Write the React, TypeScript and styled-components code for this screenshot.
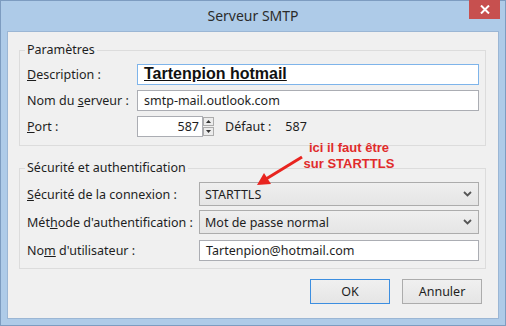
import React from "react";
import styled, { createGlobalStyle } from "styled-components";

const GlobalStyle = createGlobalStyle`
  html, body {
    margin: 0;
    padding: 0;
    background: #ffffff;
  }
  body {
    font-family: "Noto Sans", "Open Sans", sans-serif;
    font-size: 12.5px;
    color: #1e1e1e;
  }
`;

const Window = styled.div`
  position: relative;
  width: 506px;
  height: 326px;
  box-sizing: border-box;
  background: #aecbe8;
  border: 1px solid #7d9cc0;
  display: flex;
  flex-direction: column;
`;

const TitleBar = styled.div`
  height: 30px;
  display: grid;
  grid-template-columns: 1fr auto 1fr;
  align-items: start;
`;

const Title = styled.div`
  grid-column: 2;
  font-size: 14px;
  color: #2b2b2b;
  line-height: 30px;
`;

const CloseButton = styled.div`
  grid-column: 3;
  justify-self: end;
  width: 31px;
  height: 19px;
  margin-right: 5px;
  margin-top: -1px;
  background: #c7504f;
  display: flex;
  align-items: center;
  justify-content: center;
`;

const Panel = styled.div`
  flex: 1;
  margin: 0 6px 6px 6px;
  background: #f0f0f0;
  border: 1px solid #9bb6d4;
  padding: 10px 12px 0 11px;
  display: flex;
  flex-direction: column;
`;

const Group = styled.fieldset<{ $pt: number; $pb: number }>`
  margin: 0;
  border: 1px solid #dcdcdc;
  padding: ${(p) => p.$pt}px 6px ${(p) => p.$pb}px 7px;
  min-width: 0;
`;

const Legend = styled.legend`
  padding: 0 2px;
  margin-left: -2px;
  line-height: 16px;
  color: #1e1e1e;
`;

const Rows = styled.div<{ $label: number }>`
  display: grid;
  grid-template-columns: ${(p) => p.$label}px 1fr;
  align-items: center;
`;

const Label = styled.div<{ $h: number }>`
  height: ${(p) => p.$h}px;
  display: flex;
  align-items: center;
  white-space: nowrap;
`;

const TextBox = styled.div<{ $focus?: boolean }>`
  height: 21px;
  box-sizing: border-box;
  background: #ffffff;
  border: 1px solid ${(p) => (p.$focus ? "#7eb4ea" : "#abadb3")};
  display: flex;
  align-items: center;
  padding: 0 6px;
  white-space: nowrap;
  overflow: hidden;
`;

const BigText = styled.span`
  font-family: "Liberation Sans", Arial, sans-serif;
  font-weight: bold;
  font-size: 16px;
  text-decoration: underline;
  color: #111;
`;

const PortLine = styled.div`
  display: flex;
  align-items: center;
`;

const PortBox = styled(TextBox)`
  width: 66px;
  justify-content: flex-end;
  padding: 0 3px;
`;

const Spin = styled.div`
  display: flex;
  flex-direction: column;
  gap: 1px;
`;

const SpinBtn = styled.div`
  width: 11px;
  height: 9px;
  box-sizing: border-box;
  border: 1px solid #acacac;
  background: #ececec;
  display: flex;
  align-items: center;
  justify-content: center;
`;

const Default = styled.span<{ $ml: number }>`
  margin-left: ${(p) => p.$ml}px;
`;

const SelectBox = styled.div`
  height: 24px;
  box-sizing: border-box;
  border: 1px solid #acacac;
  background: linear-gradient(#efefef, #e5e5e5);
  display: flex;
  align-items: center;
  justify-content: space-between;
  padding: 0 6px 0 5px;
`;

const Gap = styled.div<{ $h: number }>`
  height: ${(p) => p.$h}px;
  flex: none;
`;

const ButtonRow = styled.div`
  display: flex;
  justify-content: flex-end;
  gap: 12px;
  padding-right: 4px;
`;

const Button = styled.div<{ $primary?: boolean }>`
  width: 80px;
  height: 25px;
  box-sizing: border-box;
  border: 1px solid ${(p) => (p.$primary ? "#3c8ee0" : "#acacac")};
  background: linear-gradient(#f0f0f0, #e5e5e5);
  display: flex;
  align-items: center;
  justify-content: center;
`;

const Note = styled.div`
  position: absolute;
  left: 298px;
  top: 139px;
  width: 100px;
  text-align: center;
  font-family: "Liberation Sans", Arial, sans-serif;
  font-weight: bold;
  font-size: 13px;
  line-height: 16px;
  color: #e02b2b;
`;

const Arrow = styled.svg`
  position: absolute;
  left: 0;
  top: 0;
  pointer-events: none;
`;

const Chevron = () => (
  <svg width="9" height="6" viewBox="0 0 9 6">
    <path d="M1 1 L4.5 4.5 L8 1" fill="none" stroke="#555" strokeWidth="1.8" />
  </svg>
);

const Tri = ({ up }: { up?: boolean }) => (
  <svg width="5" height="3" viewBox="0 0 5 3">
    <path d={up ? "M0 3 L2.5 0 L5 3 Z" : "M0 0 L2.5 3 L5 0 Z"} fill="#333" />
  </svg>
);

export default function App() {
  return (
    <>
      <GlobalStyle />
      <Window>
        <TitleBar>
          <Title>Serveur SMTP</Title>
          <CloseButton>
            <svg width="10" height="9" viewBox="0 0 10 9">
              <path d="M1 0.5 L9 8.5 M9 0.5 L1 8.5" stroke="#fff" strokeWidth="2" />
            </svg>
          </CloseButton>
        </TitleBar>
        <Panel>
          <Group $pt={3} $pb={6}>
            <Legend>Paramètres</Legend>
            <Rows $label={110}>
              <Label $h={26}>
                <span>
                  <u>D</u>escription :
                </span>
              </Label>
              <TextBox $focus>
                <BigText>Tartenpion hotmail</BigText>
              </TextBox>
              <Label $h={26}>
                <span>
                  Nom du <u>s</u>erveur :
                </span>
              </Label>
              <TextBox>smtp-mail.outlook.com</TextBox>
              <Label $h={26}>
                <span>
                  <u>P</u>ort :
                </span>
              </Label>
              <PortLine>
                <PortBox>587</PortBox>
                <Spin>
                  <SpinBtn>
                    <Tri up />
                  </SpinBtn>
                  <SpinBtn>
                    <Tri />
                  </SpinBtn>
                </Spin>
                <Default $ml={11}>Défaut :</Default>
                <Default $ml={14}>587</Default>
              </PortLine>
            </Rows>
          </Group>
          <Gap $h={14} />
          <Group $pt={4} $pb={4}>
            <Legend>Sécurité et authentification</Legend>
            <Rows $label={172}>
              <Label $h={28}>
                <span>
                  <u>S</u>écurité de la connexion :
                </span>
              </Label>
              <SelectBox>
                <span>STARTTLS</span>
                <Chevron />
              </SelectBox>
              <Label $h={28}>
                <span>
                  Mét<u>h</u>ode d'authentification :
                </span>
              </Label>
              <SelectBox>
                <span>Mot de passe normal</span>
                <Chevron />
              </SelectBox>
              <Label $h={28}>
                <span>
                  No<u>m</u> d'utilisateur :
                </span>
              </Label>
              <TextBox>Tartenpion@hotmail.com</TextBox>
            </Rows>
          </Group>
          <Gap $h={10} />
          <ButtonRow>
            <Button $primary>OK</Button>
            <Button>Annuler</Button>
          </ButtonRow>
        </Panel>
        <Note>
          ici il faut être
          <br />
          sur STARTTLS
        </Note>
        <Arrow width="506" height="326" viewBox="0 0 506 326">
          <line x1="301" y1="156" x2="265" y2="178" stroke="#e8241f" strokeWidth="3" />
          <polygon points="256,184 263,172 270,183" fill="#e8241f" />
        </Arrow>
      </Window>
    </>
  );
}
